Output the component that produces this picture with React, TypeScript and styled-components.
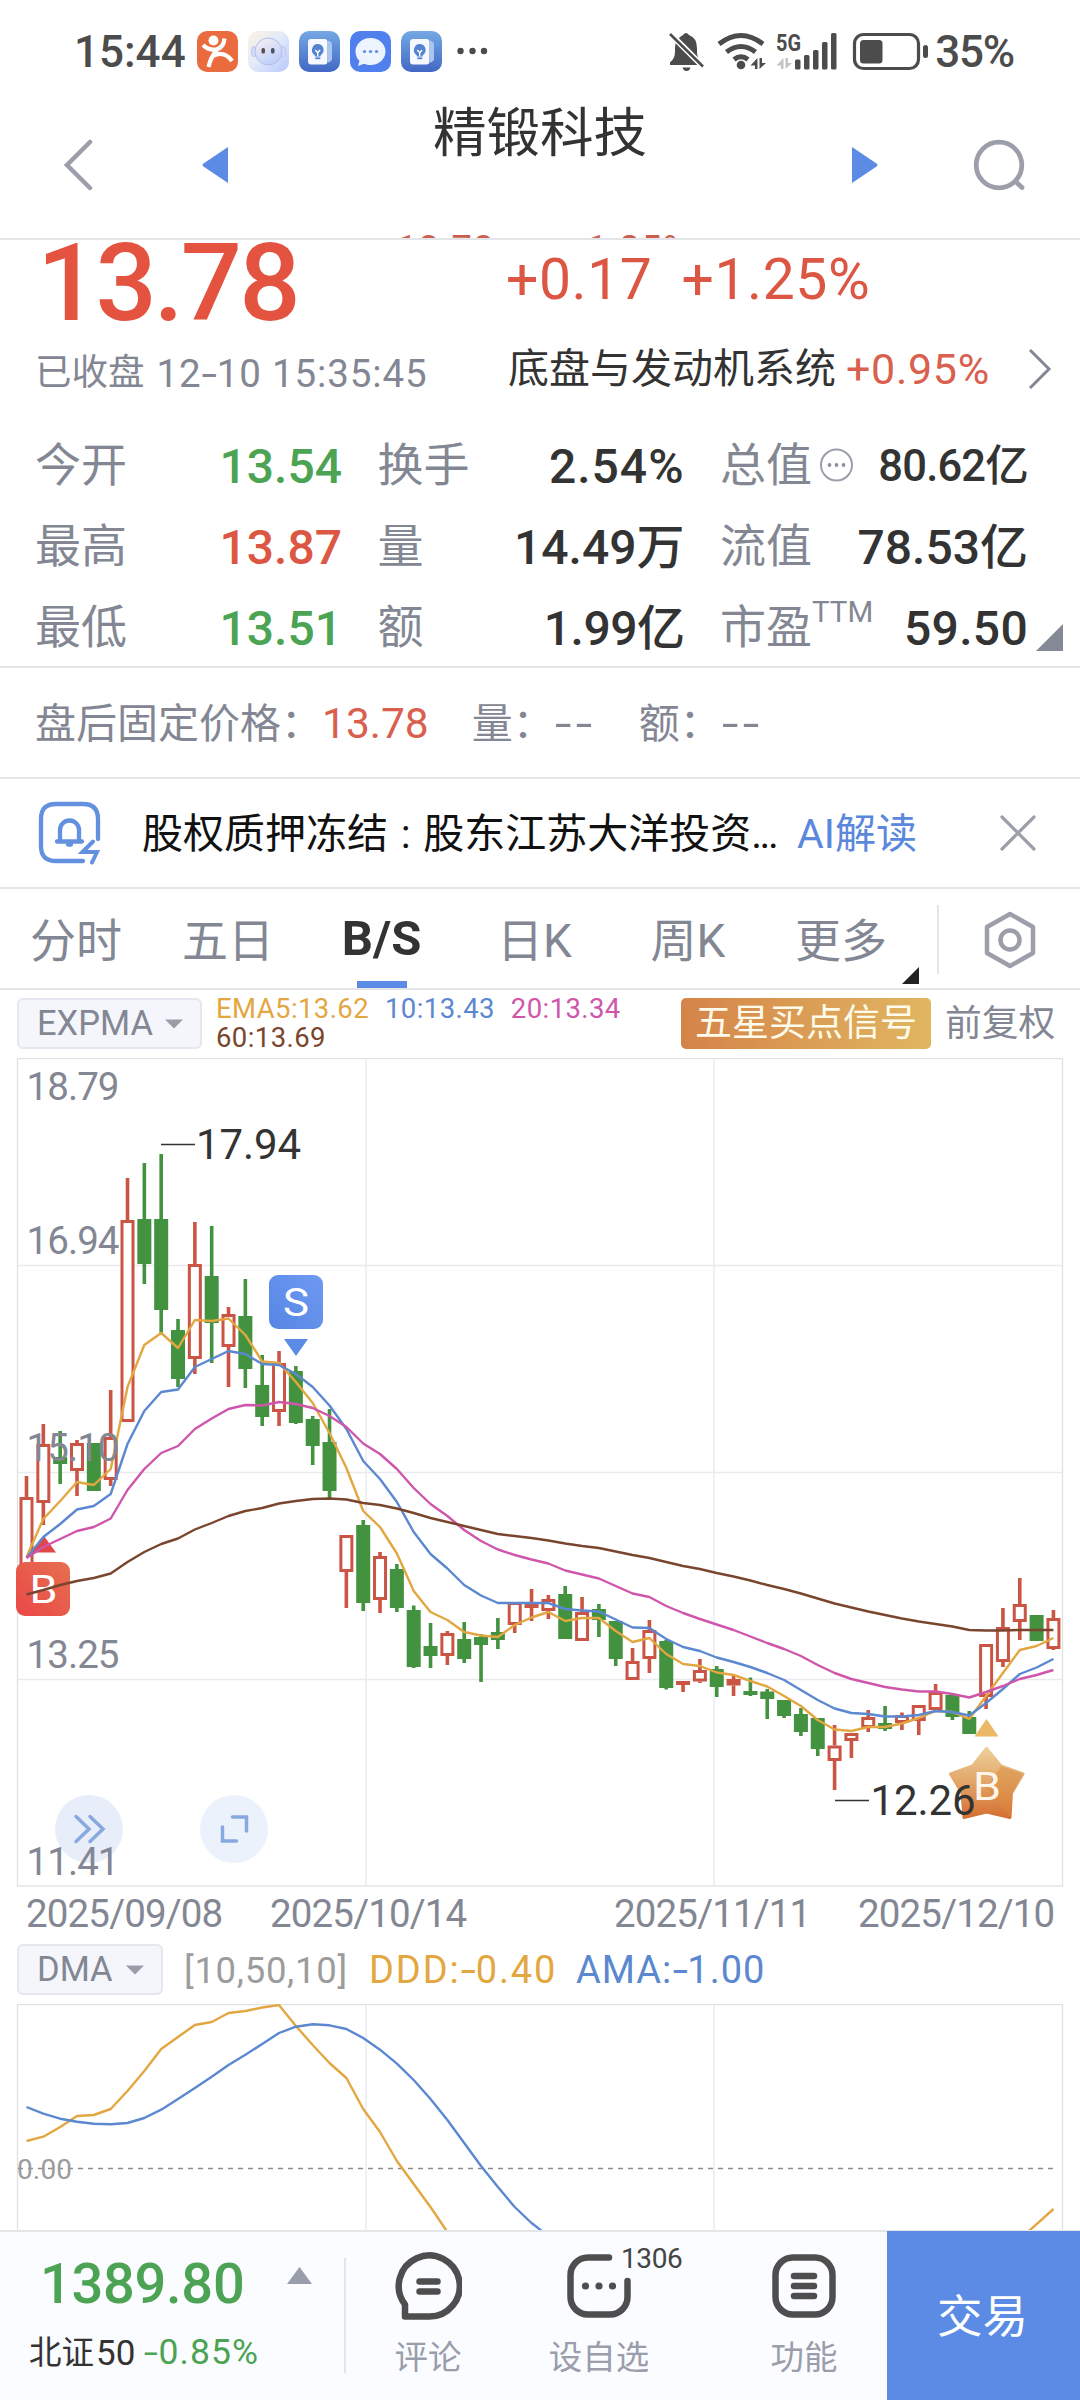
import React from 'react';
import styled, { createGlobalStyle } from 'styled-components';

const RED = '#e4533f';
const GREEN = '#4ba353';
const GRAY = '#838793';
const INK = '#333333';
const BLUE = '#5b8be5';
const LINE = '#e4e5e9';
const EMA = { y: '#e3a742', b: '#5b88d0', p: '#cf56ab', br: '#7a452d' };

const Global = createGlobalStyle`
  * { box-sizing: border-box; }
  body {
    margin: 0;
    background: #fff;
    font-family: Roboto, 'Noto Sans CJK SC', sans-serif;
    color: ${INK};
  }
  svg { display: block; flex: none; }
`;

const Screen = styled.div`
  width: 1080px;
  height: 2400px;
  overflow: hidden;
  display: flex;
  flex-direction: column;
  background: #fff;
`;

const Txt = styled.span<{ $s: number; $c?: string; $w?: number; $ls?: number; $ml?: number; $dy?: number }>`
  font-size: ${p => p.$s}px;
  color: ${p => p.$c || INK};
  font-weight: ${p => p.$w || 400};
  letter-spacing: ${p => p.$ls || 0}px;
  margin-left: ${p => p.$ml || 0}px;
  padding-top: ${p => Math.max(0, p.$dy || 0) * 2}px;
  padding-bottom: ${p => Math.max(0, -(p.$dy || 0)) * 2}px;
  line-height: 1;
  white-space: nowrap;
  flex: none;
`;

// hyphen widened to the length of a figure dash
const Dash = styled.span`
  display: inline-block;
  letter-spacing: 0;
  margin: 0 0.06em;
  transform: scaleX(1.45);
`;

// double hyphen shown while a value is not available
const Empty = styled.span`
  display: inline-block;
  width: 49px;
  font-size: 42.500px;
  line-height: 1;
  letter-spacing: 3px;
  margin-left: 1px;
  color: ${GRAY};
  transform: scaleX(1.4);
  transform-origin: 0 50%;
`;

/* ---------- status bar ---------- */
const StatusBar = styled.div`
  height: 100px;
  flex: none;
  display: flex;
  align-items: center;
  justify-content: space-between;
  padding: 3px 66px 0 74px;
`;
const Group = styled.div<{ $gap?: number }>`
  display: flex;
  align-items: center;
  gap: ${p => p.$gap || 0}px;
`;
const AppIcons = styled(Group)`
  margin-left: 11px;
`;

const NoteIcon = () => (
  <svg width="41" height="41" viewBox="0 0 41 41">
    <defs>
      <linearGradient id="note" x1="0" y1="0" x2="0" y2="1">
        <stop offset="0" stopColor="#75a8e4" />
        <stop offset="1" stopColor="#4168c4" />
      </linearGradient>
    </defs>
    <rect width="41" height="41" rx="10" fill="url(#note)" />
    <path d="M29 9.500q4 1 4 4v14q0 3-4 4z" fill="#a9c5f0" />
    <rect x="9" y="8" width="19.500" height="25.500" rx="3" fill="#f5f9ff" />
    <path d="M18.700 13a6 6 0 0 0-3.500 10.700q.8.800.8 1.800h5.500q0-1 .8-1.800A6 6 0 0 0 18.700 13z" fill="#5583d0" />
    <path d="M16.300 19l2.400 2.600 2.400-2.600M18.700 21.600v3.500" stroke="#fff" strokeWidth="1.400" fill="none" />
    <path d="M16.300 27.300h5" stroke="#5583d0" strokeWidth="1.800" />
  </svg>
);

const Status = () => (
  <StatusBar>
    <Group>
      <Txt $s={44} $w={500} $c="#4c4c4c">15:44</Txt>
      <AppIcons $gap={10}>
        <svg width="41" height="41" viewBox="0 0 41 41">
          <rect width="41" height="41" rx="10" fill="#ea6b3d" />
          <circle cx="16.500" cy="9.500" r="5" fill="#fff" />
          <path d="M6 14c4 4 9 5 13 4.500C24 17.500 27 13 27.500 7.500M11.500 36c1.500-7 4-12 8.500-17M16 25c7-4 14-2 19 5" fill="none" stroke="#fff" strokeWidth="4.200" />
        </svg>
        <svg width="41" height="41" viewBox="0 0 41 41">
          <defs>
            <linearGradient id="bot" x1="0" y1="0" x2="1" y2="1">
              <stop offset="0" stopColor="#fdf3e0" />
              <stop offset=".5" stopColor="#dfeafb" />
              <stop offset="1" stopColor="#b9c8fa" />
            </linearGradient>
            <linearGradient id="face" x1="0" y1="0" x2=".5" y2="1">
              <stop offset="0" stopColor="#f9f1f1" />
              <stop offset="1" stopColor="#bfd0fb" />
            </linearGradient>
          </defs>
          <rect width="41" height="41" rx="10" fill="url(#bot)" />
          <ellipse cx="6" cy="20.500" rx="2.500" ry="5" fill="#d3dbf9" stroke="#bcc3ee" />
          <ellipse cx="35" cy="20.500" rx="2.500" ry="5" fill="#d3dbf9" stroke="#bcc3ee" />
          <circle cx="20.500" cy="20.500" r="13.500" fill="url(#face)" stroke="#b5bdee" strokeWidth="1" />
          <rect x="13.500" y="17" width="3.500" height="5.500" rx="1.500" fill="#5f4a52" />
          <rect x="23" y="17" width="3.500" height="5.500" rx="1.500" fill="#4c5069" />
        </svg>
        <NoteIcon />
        <svg width="41" height="41" viewBox="0 0 41 41">
          <rect width="41" height="41" rx="10" fill="#4f80ee" />
          <path d="M20.500 7c8.500 0 15 6 15 13.500s-6.500 13.500-15 13.500c-2.500 0-4.500-.4-6.500-1.300L8 35l1.500-5C7 27.500 5.500 24 5.500 20.500 5.500 13 12 7 20.500 7z" fill="#edf4ff" />
          <g fill="#5b8be5">
            <circle cx="14.500" cy="20.500" r="1.600" />
            <circle cx="20.500" cy="20.500" r="1.600" />
            <circle cx="26.500" cy="20.500" r="1.600" />
          </g>
        </svg>
        <NoteIcon />
        <svg width="40" height="10" viewBox="0 0 40 10" fill="#4c4c4c">
          <circle cx="8.500" cy="4" r="3.200" />
          <circle cx="20.500" cy="4" r="3.200" />
          <circle cx="32" cy="4" r="3.200" />
        </svg>
      </AppIcons>
    </Group>
    <Group>
      <svg width="268" height="42" viewBox="0 0 268 42" fill="#4c4c4c">
        <path d="M3 34v-2.500q5-4 5-11v-3.500Q8 8 16 4q3-4 6 0 8 3 8 13v4q0 7 5 11V34z" />
        <path d="M15.500 36.500h8q-1 3.500-4 3.500t-4-3.500z" />
        <path d="M2 1.500l34 34" stroke="#fff" strokeWidth="6" />
        <path d="M3 3l33 32.500" stroke="#4c4c4c" strokeWidth="2.600" />
        <g fill="none" stroke="#4c4c4c" strokeWidth="5">
          <path d="M52 13q22-17 44 0" />
          <path d="M59.500 21q14.500-11 29 0" />
          <path d="M67 28.500q7-5.500 14 0" />
        </g>
        <circle cx="74" cy="34" r="4.300" />
        <path d="M90.500 27v11h-2.500v-3.500h-4.500zM92.500 27v11l6.500-6h-4v-5z" />
        <text x="109" y="19.500" fontSize="24" fontWeight="700" textLength="25" lengthAdjust="spacingAndGlyphs">5G</text>
        <path d="M116.500 27v11h-2.500v-3.500h-4.500zM118.500 27v11l6.500-6h-4v-5z" fill="#c4c4c4" />
        <rect x="128" y="28.500" width="5.500" height="10" rx="1.500" />
        <rect x="137" y="24" width="5.500" height="14.500" rx="1.500" />
        <rect x="146" y="19" width="5.500" height="19.500" rx="1.500" />
        <rect x="155" y="11" width="5.500" height="27.500" rx="1.500" />
        <rect x="164" y="2" width="5.500" height="36.500" rx="1.500" />
        <rect x="187.500" y="3.500" width="64" height="34" rx="9" fill="none" stroke="#4c4c4c" strokeWidth="3.200" />
        <rect x="193" y="9" width="22.500" height="23.500" rx="3.500" />
        <rect x="256" y="14" width="5" height="13" rx="2.500" />
      </svg>
      <Txt $s={44} $w={500} $c="#4c4c4c" $ls={-1.2}>35%</Txt>
    </Group>
  </StatusBar>
);

/* ---------- nav ---------- */
const Nav = styled.header`
  height: 140px;
  flex: none;
  display: grid;
  grid-template-columns: 380px 320px 380px;
  overflow: hidden;
  border-bottom: 2px solid ${LINE};
`;
const NavSide = styled.div<{ $right?: boolean }>`
  height: 130px;
  display: flex;
  align-items: center;
  justify-content: space-between;
  padding: ${p => (p.$right ? '0 55px 0 152px' : '0 152px 0 63px')};
`;
const TitleBox = styled.div`
  display: flex;
  flex-direction: column;
  align-items: center;
`;
const Title = styled.h1`
  margin: 2px 0 0;
  font-size: 53.500px;
  line-height: 64px;
  font-weight: 400;
  color: ${INK};
`;
const SubTitle = styled.div`
  display: flex;
  gap: 70px;
  margin-top: 63px;
  padding-left: 8px;
  font-size: 36px;
  letter-spacing: 1.5px;
  line-height: 40px;
  color: #c9604f;
  white-space: nowrap;
`;

/* ---------- quote ---------- */
const Quote = styled.section`
  height: 428px;
  flex: none;
  position: relative;
  border-bottom: 2px solid ${LINE};
`;
const PriceRow = styled.div`
  height: 92px;
  display: grid;
  grid-template-columns: 469px 1fr;
  padding-left: 37px;
`;
const Price = styled.div`
  font-size: 108px;
  line-height: 86px;
  font-weight: 500;
  letter-spacing: -3px;
  color: ${RED};
`;
const Change = styled.div`
  display: flex;
  gap: 29px;
  font-size: 57px;
  line-height: 79px;
  letter-spacing: 0.6px;
  color: #dc5743;
`;
const InfoRow = styled.div`
  height: 78px;
  display: grid;
  grid-template-columns: 473px 485px 1fr;
  padding: 0 27px 0 35px;
  align-items: center;
  justify-items: start;
  & > svg { justify-self: end; margin-bottom: 4px; }
`;
const Stats = styled.div`
  display: grid;
  grid-template-columns: 307px 307px 308px;
  column-gap: 35.5px;
  grid-auto-rows: 81px;
  padding: 14px 0 0 35px;
`;
const Stat = styled.div`
  display: flex;
  align-items: center;
  justify-content: space-between;
`;
const Label = styled.span`
  display: flex;
  align-items: center;
  font-size: 46px;
  line-height: 60px;
  color: ${GRAY};
  white-space: nowrap;
`;
const Sup = styled.sup`
  align-self: flex-start;
  font-size: 29.500px;
  line-height: 30px;
`;
const Value = styled.span<{ $c?: string; $s?: number; $ls?: number }>`
  font-size: ${p => p.$s || 48}px;
  line-height: 60px;
  padding-top: 5px;
  font-weight: 500;
  letter-spacing: ${p => p.$ls ?? 0}px;
  color: ${p => p.$c || INK};
  white-space: nowrap;
`;
const Corner = styled.svg`
  position: absolute;
  right: 17px;
  bottom: 15px;
`;

const MoreDots = () => (
  <svg width="42" height="34" viewBox="0 0 42 34">
    <circle cx="24.500" cy="17" r="15.500" fill="none" stroke="#9b9faa" strokeWidth="2" />
    <g fill="#8d919c">
      <circle cx="17.500" cy="17" r="1.900" />
      <circle cx="24.500" cy="17" r="1.900" />
      <circle cx="31.500" cy="17" r="1.900" />
    </g>
  </svg>
);

const QuotePanel = () => (
  <Quote>
    <PriceRow>
      <Price>13.78</Price>
      <Change><span>+0.17</span><span>+1.25%</span></Change>
    </PriceRow>
    <InfoRow>
      <Group>
        <Txt $s={36.5} $c={GRAY} $dy={2}>已收盘</Txt>
        <Txt $s={38.5} $c={GRAY} $ml={12} $dy={3} $ls={0.85}>12<Dash>-</Dash>10 15:35:45</Txt>
      </Group>
      <Group>
        <Txt $s={41} $dy={-2}>底盘与发动机系统</Txt>
        <Txt $s={43} $c="#d9604e" $ml={10} $ls={0.7} $dy={-2}>+0.95%</Txt>
      </Group>
      <svg width="26" height="42" viewBox="0 0 26 42" fill="none" stroke={GRAY} strokeWidth="3">
        <path d="M3 2l19 19L3 40" />
      </svg>
    </InfoRow>
    <Stats>
      <Stat><Label>今开</Label><Value $c={GREEN}>13.54</Value></Stat>
      <Stat><Label>换手</Label><Value $ls={1}>2.54%</Value></Stat>
      <Stat><Label>总值<MoreDots /></Label><Value $s={43.5} $ls={-0.8}>80.62亿</Value></Stat>
      <Stat><Label>最高</Label><Value $c="#dc5743">13.87</Value></Stat>
      <Stat><Label>量</Label><Value>14.49万</Value></Stat>
      <Stat><Label>流值</Label><Value>78.53亿</Value></Stat>
      <Stat><Label>最低</Label><Value $c={GREEN}>13.51</Value></Stat>
      <Stat><Label>额</Label><Value $ls={-0.5}>1.99亿</Value></Stat>
      <Stat><Label>市盈<Sup>TTM</Sup></Label><Value $ls={0.3}>59.50</Value></Stat>
    </Stats>
    <Corner width="27" height="27" viewBox="0 0 27 27"><path d="M27 0v27H0z" fill="#858995" /></Corner>
  </Quote>
);

/* ---------- after hours / notice ---------- */
const AfterHours = styled.section`
  height: 111px;
  flex: none;
  display: flex;
  align-items: center;
  padding: 4px 0 0 35px;
  border-bottom: 2px solid ${LINE};
`;
const Notice = styled.section`
  height: 110px;
  flex: none;
  display: flex;
  align-items: center;
  padding: 0 44px 0 38px;
  border-bottom: 2px solid ${LINE};
`;
const NoticeText = styled.div`
  width: 640px;
  margin-left: 38px;
  padding-top: 2px;
  font-size: 41px;
  line-height: 54px;
  word-spacing: 2.500px;
  color: #111;
  white-space: nowrap;
`;
const Dots = styled.span`
  letter-spacing: -2.500px;
`;
const NoticeLink = styled.a`
  margin: 0 auto 0 15px;
  padding-top: 2px;
  font-size: 41px;
  line-height: 54px;
  color: #5a88dc;
`;

/* ---------- tabs ---------- */
const Tabs = styled.nav`
  height: 101px;
  flex: none;
  display: grid;
  grid-template-columns: 152px 152px 155px 153px 154px 171px 1fr;
  border-bottom: 2px solid ${LINE};
`;
const Tab = styled.div<{ $on?: boolean; $pr?: number }>`
  position: relative;
  display: flex;
  align-items: center;
  justify-content: center;
  padding: 0 ${p => p.$pr || 0}px ${p => (p.$on ? 1 : 3)}px 0;
  font-size: ${p => (p.$on ? 49 : 46)}px;
  font-weight: ${p => (p.$on ? 700 : 400)};
  color: ${p => (p.$on ? INK : GRAY)};
  &::after {
    content: '';
    display: ${p => (p.$on ? 'block' : 'none')};
    position: absolute;
    left: 53px;
    bottom: 0;
    width: 50px;
    height: 7px;
    background: ${BLUE};
  }
`;
const TabCorner = styled.svg`
  position: absolute;
  right: 18px;
  bottom: 4px;
`;
const Settings = styled.div`
  height: 69px;
  margin-top: 16px;
  border-left: 2px solid ${LINE};
  display: flex;
  align-items: center;
  padding-left: 45px;
`;

/* ---------- indicator headers ---------- */
const Indicators = styled.div`
  height: 68px;
  flex: none;
  display: flex;
  align-items: flex-start;
  padding: 8px 17px 0;
`;
const Picker = styled.button<{ $w: number }>`
  width: ${p => p.$w}px;
  height: 51px;
  flex: none;
  padding: 0 17px 0 18px;
  display: flex;
  align-items: center;
  justify-content: space-between;
  border: 2px solid #e5e6ef;
  border-radius: 6px;
  background: #f5f6fb;
  color: ${GRAY};
  font: 400 34.500px/1 Roboto, sans-serif;
`;
const Emas = styled.div`
  width: 479px;
  flex: none;
  padding: 0 20px 0 14px;
  display: flex;
  flex-wrap: wrap;
  column-gap: 16px;
  align-content: flex-start;
  font-size: 27.500px;
  letter-spacing: 0.4px;
  line-height: 29px;
  margin-top: -4px;
`;
const Ema = styled.span<{ $c: string }>`
  color: ${p => p.$c};
`;
const Signal = styled.div`
  width: 250px;
  height: 51px;
  flex: none;
  display: flex;
  align-items: center;
  justify-content: center;
  border-radius: 5px;
  background: linear-gradient(90deg, #d58449, #e0b661);
  color: #fffbea;
  font-size: 37px;
  line-height: 51px;
`;
const Adjust = styled.div`
  margin-left: 14px;
  font-size: 36.800px;
  line-height: 51px;
  color: ${GRAY};
  white-space: nowrap;
`;
const Caret = () => (
  <svg width="18" height="10" viewBox="0 0 18 10"><path d="M0 .5h18L9 9.500z" fill="#9a9da8" /></svg>
);

/* ---------- main chart ---------- */
type Candle = [number, number, number, number, number];
// up flag, high, body top, body bottom, low
const CANDLES: Candle[] = [
  [1, 1476, 1497, 1567, 1567], [1, 1424, 1444, 1503, 1525], [0, 1431, 1457, 1464, 1484], [1, 1440, 1443, 1471, 1496],
  [0, 1443, 1443, 1491, 1491], [1, 1390, 1437, 1480, 1486], [1, 1178, 1220, 1422, 1422], [0, 1163, 1219, 1264, 1284],
  [0, 1154, 1219, 1310, 1335], [0, 1319, 1330, 1379, 1387], [1, 1222, 1264, 1359, 1374], [0, 1226, 1276, 1323, 1363],
  [1, 1307, 1314, 1347, 1387], [0, 1279, 1316, 1369, 1388], [0, 1355, 1385, 1417, 1426], [1, 1351, 1363, 1412, 1426],
  [0, 1366, 1371, 1423, 1424], [0, 1416, 1419, 1446, 1465], [0, 1409, 1442, 1491, 1498], [1, 1535, 1535, 1572, 1608],
  [0, 1520, 1525, 1603, 1611], [1, 1552, 1556, 1600, 1613], [0, 1564, 1569, 1608, 1612], [0, 1605.5, 1610, 1667, 1668],
  [0, 1623, 1646, 1656, 1668], [1, 1631, 1633, 1656, 1665], [0, 1622, 1639, 1659, 1663], [0, 1634, 1637, 1645, 1682],
  [0, 1618, 1632, 1640, 1649], [1, 1602, 1602, 1625, 1633], [1, 1589, 1602, 1608, 1621], [1, 1595, 1599, 1611, 1619],
  [0, 1586, 1594, 1639, 1639], [1, 1597, 1612, 1641, 1641], [0, 1604, 1609, 1620, 1637], [0, 1621, 1621, 1659, 1666],
  [1, 1648, 1661, 1680, 1680], [1, 1620, 1630, 1659, 1673], [0, 1640, 1641, 1688, 1689.5], [1, 1681, 1681, 1685, 1692],
  [1, 1659, 1670, 1681.5, 1683], [0, 1666, 1669, 1687, 1697], [1, 1675, 1679, 1685.5, 1696], [0, 1677.5, 1691, 1695, 1696],
  [0, 1689, 1691.5, 1699, 1719], [0, 1700, 1700, 1716, 1718], [0, 1708, 1714, 1732, 1736], [0, 1718, 1718, 1749, 1756],
  [1, 1725, 1745.5, 1761, 1790], [1, 1733, 1733, 1741, 1758], [1, 1710, 1717, 1728, 1732], [0, 1706, 1723, 1729, 1731],
  [1, 1712.5, 1715, 1723, 1730], [1, 1705, 1705, 1721, 1735], [1, 1684, 1692, 1710, 1710], [0, 1695, 1695, 1717, 1720],
  [0, 1711, 1717, 1734, 1734], [1, 1644, 1644, 1697, 1709], [1, 1608, 1627, 1662, 1667], [1, 1578, 1604, 1622, 1640],
  [0, 1615, 1615, 1641, 1641], [1, 1610, 1618, 1649, 1650],
];
const EMA5 = [1557, 1519, 1501, 1482, 1485, 1469, 1387, 1345, 1333, 1348, 1320, 1321, 1318.5, 1335, 1361.5, 1363, 1382, 1403, 1433, 1468, 1511, 1527, 1553.5, 1591, 1612, 1620, 1632, 1635.5, 1637, 1625, 1617.5, 1612, 1621, 1618, 1618, 1631, 1642, 1638, 1654, 1664, 1666, 1672.5, 1675, 1681, 1686.5, 1696, 1706, 1720, 1729.5, 1731, 1727, 1727, 1723.5, 1718, 1711, 1712, 1719, 1696, 1673, 1650, 1646, 1638];
const EMA10 = [1558, 1537, 1524, 1509.5, 1506, 1494, 1444, 1411, 1392, 1389.5, 1367, 1359, 1351, 1354, 1364, 1365, 1374, 1387, 1405.5, 1429, 1461, 1479, 1502, 1532, 1554, 1568.5, 1585, 1595.5, 1603, 1603, 1603, 1603, 1609, 1610.5, 1611.5, 1619.5, 1627.5, 1628, 1639, 1647, 1651, 1657.5, 1662, 1667, 1673, 1680, 1690, 1700, 1708.5, 1713, 1714, 1716.5, 1716.5, 1715, 1711, 1712, 1715.5, 1703, 1689, 1674, 1667.5, 1659];
const EMA20 = [1558, 1547, 1539, 1531, 1527, 1518.5, 1490, 1469, 1453, 1446, 1429, 1418.5, 1409, 1405, 1405.5, 1402, 1404, 1408, 1416, 1427, 1443.5, 1454, 1469, 1488, 1504, 1516, 1530, 1541, 1549.5, 1555, 1559.5, 1563.5, 1570.5, 1574.5, 1578.5, 1586, 1593.5, 1597, 1606, 1613, 1619, 1624.5, 1630, 1636.5, 1643, 1649, 1656, 1665, 1673, 1679, 1683, 1687, 1689.5, 1691.5, 1691.5, 1694, 1697.5, 1692, 1686, 1679, 1675, 1670];
const EMA60 = [1594.5, 1590, 1585, 1581, 1578, 1573.5, 1562, 1552, 1544, 1538.5, 1529.5, 1523, 1516, 1511, 1508, 1503.5, 1501, 1499, 1498.5, 1499.5, 1503, 1505, 1508.5, 1513, 1518, 1522, 1526, 1530, 1534, 1536, 1538, 1540.5, 1543.5, 1546, 1548, 1551.5, 1555, 1558, 1562, 1566, 1569, 1573, 1576.5, 1580.5, 1585, 1589, 1593.5, 1598.5, 1603.5, 1607.5, 1611.5, 1615, 1618.5, 1621.5, 1624, 1626.5, 1630, 1630.5, 1630.5, 1630, 1630, 1630];
const DDD = [2141, 2136.7, 2127, 2116, 2115, 2109, 2091, 2071, 2049, 2037, 2025, 2022, 2013, 2011, 2007.5, 2005, 2026, 2045, 2063, 2078, 2109, 2132, 2161, 2184, 2207, 2232];
const AMA = [2107, 2113.7, 2118.7, 2121.7, 2123.7, 2124.3, 2123, 2118, 2109.7, 2099, 2088, 2076.7, 2065, 2054.7, 2044, 2033, 2026.7, 2024.3, 2025.3, 2029, 2038, 2049.7, 2063.7, 2080, 2099, 2120, 2143, 2166, 2187, 2207, 2223, 2236];

const xAt = (i: number) => 26.5 + i * 16.835;
const pts = (a: number[]) => a.map((y, i) => `${xAt(i).toFixed(1)},${y}`).join(' ');

const ChartText = styled.text`
  font-family: Roboto, sans-serif;
`;
const Line = styled.polyline`
  fill: none;
  stroke-width: 2.4;
  stroke-linejoin: round;
`;

const CandleShape = ({ c, i }: { c: Candle; i: number }) => {
  const [up, hi, top, bot, lo] = c;
  const x = xAt(i);
  if (!up) {
    return (
      <g fill="#43923f">
        <rect x={x - 1.8} y={hi} width="3.6" height={lo - hi} />
        <rect x={x - 7} y={top} width="14" height={bot - top} />
      </g>
    );
  }
  return (
    <g fill="#cb5544">
      <rect x={x - 1.8} y={hi} width="3.6" height={top - hi} />
      <rect x={x - 1.8} y={bot} width="3.6" height={lo - bot} />
      {bot - top <= 6.5
        ? <rect x={x - 7} y={top} width="14" height={bot - top} />
        : <rect x={x - 5.5} y={top + 1.5} width="11" height={bot - top - 3} fill="#fff" stroke="#cb5544" strokeWidth="3" />}
    </g>
  );
};

const PRICES: [string, number][] = [['18.79', 1100], ['16.94', 1254], ['15.10', 1461], ['13.25', 1668], ['11.41', 1875]];

const MainChart = () => (
  <svg width="1080" height="829" viewBox="0 1058 1080 829">
    <defs>
      <linearGradient id="sellBg" x1="0" y1="1" x2="1" y2="0">
        <stop offset="0" stopColor="#5685e4" /><stop offset="1" stopColor="#6f9af2" />
      </linearGradient>
      <linearGradient id="buyBg" x1="0" y1="1" x2="1" y2="0">
        <stop offset="0" stopColor="#ea4747" /><stop offset="1" stopColor="#e6704f" />
      </linearGradient>
      <linearGradient id="star" x1="0" y1="0" x2="0" y2="1">
        <stop offset="0" stopColor="#eccf98" /><stop offset=".5" stopColor="#e2a467" /><stop offset="1" stopColor="#d66f33" />
      </linearGradient>
    </defs>
    <g stroke="#eff0f3" strokeWidth="2">
      <path d="M366 1059V1886M714 1059V1886" />
      <path d="M18 1265.500H1062M18 1472.500H1062M18 1679.500H1062" stroke="#e9eaed" strokeWidth="1.500" />
    </g>
    <rect x="17.500" y="1058.500" width="1045" height="827.500" fill="none" stroke="#e0e1e5" strokeWidth="1.300" />
    {CANDLES.map((c, i) => <CandleShape key={i} c={c} i={i} />)}
    <path d="M44 1536l12 16.500H32z" fill="#e04848" />
    <rect x="16" y="1562" width="54" height="54" rx="9" fill="url(#buyBg)" />
    <ChartText x="43.500" y="1602.500" fontSize="38" fill="#fff" textAnchor="middle" textLength="28" lengthAdjust="spacingAndGlyphs">B</ChartText>
    <rect x="269" y="1275" width="54" height="54" rx="9" fill="url(#sellBg)" />
    <ChartText x="296" y="1315.500" fontSize="38" fill="#fff" textAnchor="middle" textLength="26" lengthAdjust="spacingAndGlyphs">S</ChartText>
    <path d="M284 1339h24l-12 17z" fill={BLUE} />
    <path d="M986.500 1719l12 17.500h-24z" fill="#ebb866" />
    <path d="M986.500 1748.500l14.500 17.500 22 8-11.500 19-1.500 24.500-23.500-5.500-22.500 5.500-2-24.500-11.500-19 22-8z" fill="url(#star)" stroke="url(#star)" strokeWidth="3" strokeLinejoin="round" />
    <path d="M1001 1766l22 8-11.500 19-1.500 24.500-23.500-30z" fill="#d98a3c" opacity=".45" />
    <ChartText x="987" y="1799.500" fontSize="38" fill="#fff6ea" textAnchor="middle" textLength="28" lengthAdjust="spacingAndGlyphs">B</ChartText>
    <circle cx="89" cy="1829" r="34" fill="#e7eef9" />
    <circle cx="234" cy="1829" r="34" fill="#ecf2fb" />
    <g fill="none" stroke="#88a9e0" strokeWidth="3.500" strokeLinecap="round">
      <path d="M76 1816.500l13 12.500-13 12.500M90 1816.500l13 12.500-13 12.500" />
      <path d="M232.500 1817h14v14M222.500 1827v14h14" />
    </g>
    <Line points={pts(EMA5)} stroke={EMA.y} />
    <Line points={pts(EMA10)} stroke={EMA.b} />
    <Line points={pts(EMA20)} stroke={EMA.p} />
    <Line points={pts(EMA60)} stroke={EMA.br} />
    {PRICES.map(([t, y]) => (
      <ChartText key={t} x="26.500" y={y} fontSize="38.500" fill={GRAY} textLength="93">{t}</ChartText>
    ))}
    <path d="M161 1144.500h34M835 1800.500h34" stroke="#333" strokeWidth="1.300" />
    <ChartText x="196" y="1159" fontSize="42" fill={INK} textLength="105">17.94</ChartText>
    <ChartText x="870.500" y="1815" fontSize="42" fill={INK} textLength="105">12.26</ChartText>
  </svg>
);

const Dates = styled.div`
  height: 57px;
  flex: none;
  display: grid;
  grid-template-columns: 244px 344px 244px 1fr;
  padding: 0 0 0 26px;
  font-size: 38.500px;
  line-height: 54px;
  letter-spacing: -0.85px;
  color: ${GRAY};
`;
const DmaHead = styled.div`
  height: 60px;
  flex: none;
  display: flex;
  align-items: flex-start;
  padding-left: 17px;
`;
const DmaValue = styled.span<{ $c: string; $s: number; $ls: number; $w: number }>`
  width: ${p => p.$w}px;
  font-size: ${p => p.$s}px;
  letter-spacing: ${p => p.$ls}px;
  line-height: 53px;
  white-space: nowrap;
  color: ${p => p.$c};
`;
const DmaValues = styled.div`
  display: flex;
  padding-left: 21px;
`;

const DmaChart = () => (
  <svg width="1080" height="226" viewBox="0 2004 1080 226">
    <path d="M366 2005V2230M714 2005V2230" stroke="#eff0f3" strokeWidth="2" />
    <path d="M17.500 2230V2004.700H1062.500V2230" fill="none" stroke="#e0e1e5" strokeWidth="1.300" />
    <path d="M18 2168.500H1057" stroke="#8b8b8b" strokeWidth="1.300" strokeDasharray="5 5" />
    <Line points={pts(DDD)} stroke={EMA.y} />
    <path d="M1029 2231L1053.500 2209" stroke={EMA.y} strokeWidth="2.400" />
    <Line points={pts(AMA)} stroke={EMA.b} />
    <ChartText x="17" y="2178.500" fontSize="28" fill="#9c9c9c" textLength="55">0.00</ChartText>
  </svg>
);

/* ---------- bottom bar ---------- */
const Bottom = styled.footer`
  height: 170px;
  flex: none;
  display: flex;
  border-top: 2px solid ${LINE};
  background: #fbfcff;
`;
const IndexBox = styled.div`
  width: 346px;
  height: 115px;
  flex: none;
  margin-top: 26px;
  border-right: 2px solid #e4e5ec;
  padding: 0 32px 0 29px;
`;
const IndexTop = styled.div`
  height: 64px;
  margin-top: -7px;
  display: flex;
  justify-content: space-between;
  padding-left: 11px;
  font-size: 56px;
  line-height: 66px;
  font-weight: 500;
  letter-spacing: -0.3px;
  color: ${GREEN};
  svg { margin-top: 16px; }
`;
const IndexSub = styled.div`
  height: 70px;
  display: flex;
  align-items: center;
  padding-top: 6px;
`;
const Action = styled.div<{ $w: number; $pl?: number }>`
  position: relative;
  width: ${p => p.$w}px;
  flex: none;
  padding: 20px 0 0 ${p => p.$pl || 0}px;
  display: flex;
  flex-direction: column;
  align-items: center;
  gap: 12px;
  font-size: 33.500px;
  line-height: 52px;
  color: #9a9dab;
`;
const Count = styled.span`
  position: absolute;
  left: 111px;
  top: 10px;
  font-size: 28px;
  line-height: 34px;
  letter-spacing: -0.4px;
  color: #444;
`;
const Trade = styled.button`
  width: 193px;
  height: 169px;
  flex: none;
  margin: -1px 0 0;
  border: 0;
  padding: 0 2px 3px 0;
  background: ${BLUE};
  color: #fff;
  font: 400 45.500px/1 'Noto Sans CJK SC', sans-serif;
`;

const BottomBar = () => (
  <Bottom>
    <IndexBox>
      <IndexTop>
        1389.80
        <svg width="25" height="17" viewBox="0 0 25 17"><path d="M12.500 0L25 17H0z" fill="#9a9dab" /></svg>
      </IndexTop>
      <IndexSub>
        <Txt $s={32.5} $w={400}>北证</Txt>
        <Txt $s={35} $ml={2}>50</Txt>
        <Txt $s={35.5} $c={GREEN} $ml={9} $ls={1.1}><Dash>-</Dash>0.85%</Txt>
      </IndexSub>
    </IndexBox>
    <Action $w={164}>
      <svg width="68" height="68" viewBox="0 0 68 68" fill="none" stroke="#4e4e4e" strokeWidth="6.500">
        <path d="M34.500 64.500H11V52.500A30.500 30.500 0 1 1 34.500 64.500z" strokeLinejoin="round" />
        <path d="M25.500 29.500h18M25.500 39.500h18" strokeLinecap="round" />
      </svg>
      评论
    </Action>
    <Action $w={178}>
      <svg width="68" height="68" viewBox="0 0 68 68" fill="none" stroke="#4e4e4e" strokeWidth="6.500" strokeLinecap="round">
        <path d="M44 5.500H23A17.500 17.500 0 0 0 5.500 23v22A17.500 17.500 0 0 0 23 62.500h22A17.500 17.500 0 0 0 62.500 45V29" />
        <g fill="#4e4e4e" stroke="none">
          <circle cx="20.500" cy="34" r="3.600" /><circle cx="34" cy="34" r="3.600" /><circle cx="47.500" cy="34" r="3.600" />
        </g>
      </svg>
      设自选
      <Count>1306</Count>
    </Action>
    <Action $w={199} $pl={33}>
      <svg width="68" height="68" viewBox="0 0 68 68" fill="none" stroke="#4e4e4e" strokeWidth="6.500" strokeLinecap="round">
        <rect x="5.500" y="5.500" width="57" height="57" rx="17.500" />
        <path d="M24 24h20M24 34h20M24 44h20" />
      </svg>
      功能
    </Action>
    <Trade>交易</Trade>
  </Bottom>
);

export default function App() {
  return (
    <Screen>
      <Global />
      <Status />
      <Nav>
        <NavSide>
          <svg width="30" height="52" viewBox="0 0 30 52" fill="none" stroke="#9c9faa" strokeWidth="4.500" strokeLinecap="round">
            <path d="M27 3L4 26l23 23" />
          </svg>
          <svg width="26" height="36" viewBox="0 0 26 36"><path d="M26 0v36L1.500 19.500q-2-1.500 0-3z" fill={BLUE} /></svg>
        </NavSide>
        <TitleBox>
          <Title>精锻科技</Title>
          <SubTitle><span>13.78</span><span>+1.25%</span></SubTitle>
        </TitleBox>
        <NavSide $right>
          <svg width="26" height="36" viewBox="0 0 26 36"><path d="M0 0v36l24.500-16.500q2-1.500 0-3z" fill={BLUE} /></svg>
          <svg width="52" height="52" viewBox="0 0 52 52" fill="none" stroke="#9c9faa" strokeWidth="4.800" strokeLinecap="round">
            <circle cx="26" cy="26" r="22.800" />
            <path d="M42.500 42.500l6.500 6" />
          </svg>
        </NavSide>
      </Nav>
      <QuotePanel />
      <AfterHours>
        <Txt $s={41} $c={GRAY}>盘后固定价格：</Txt>
        <Txt $s={42.5} $c="#d9604e">13.78</Txt>
        <Txt $s={41} $c={GRAY} $ml={43}>量：</Txt>
        <Empty>--</Empty>
        <Txt $s={41} $c={GRAY} $ml={35}>额：</Txt>
        <Empty>--</Empty>
      </AfterHours>
      <Notice>
        <svg width="66" height="64" viewBox="0 0 66 64" fill="none" stroke="#6490e0" strokeWidth="4.300" strokeLinecap="round">
          <path d="M45 60H18Q3 60 3 45V18Q3 3 18 3h27q15 0 15 15v20" />
          <path d="M19 40.500h25M22 40V29a9.500 9.500 0 0 1 19 0v11M30 43.500h3" />
          <path d="M55 40.500L44.500 51h14.500L54 61.500" strokeWidth="4" />
        </svg>
        <NoticeText>股权质押冻结 : 股东江苏大洋投资<Dots>...</Dots></NoticeText>
        <NoticeLink>AI解读</NoticeLink>
        <svg width="36" height="36" viewBox="0 0 36 36" stroke="#9c9faa" strokeWidth="3.200" strokeLinecap="round">
          <path d="M2 2l32 32M34 2L2 34" />
        </svg>
      </Notice>
      <Tabs>
        <Tab>分时</Tab>
        <Tab>五日</Tab>
        <Tab $on>B/S</Tab>
        <Tab $pr={2}>日K</Tab>
        <Tab $pr={2}>周K</Tab>
        <Tab $pr={21}>
          更多
          <TabCorner width="17" height="17" viewBox="0 0 17 17"><path d="M17 0v17H0z" fill="#222" /></TabCorner>
        </Tab>
        <Settings>
          <svg width="52" height="58" viewBox="0 0 52 58" fill="none" stroke="#9c9faa" strokeWidth="4.500" strokeLinejoin="round">
            <path d="M26 3l23 13v26L26 55 3 42V16z" />
            <circle cx="26" cy="29" r="9.500" />
          </svg>
        </Settings>
      </Tabs>
      <Indicators>
        <Picker $w={185}>EXPMA<Caret /></Picker>
        <Emas>
          <Ema $c={EMA.y}>EMA5:13.62</Ema>
          <Ema $c={EMA.b}>10:13.43</Ema>
          <Ema $c={EMA.p}>20:13.34</Ema>
          <Ema $c={EMA.br}>60:13.69</Ema>
        </Emas>
        <Signal>五星买点信号</Signal>
        <Adjust>前复权</Adjust>
      </Indicators>
      <MainChart />
      <Dates>
        <span>2025/09/08</span>
        <span>2025/10/14</span>
        <span>2025/11/11</span>
        <span>2025/12/10</span>
      </Dates>
      <DmaHead>
        <Picker $w={146}>DMA<Caret /></Picker>
        <DmaValues>
          <DmaValue $c="#9c9c9c" $s={36.5} $ls={0.7} $w={185}>[10,50,10]</DmaValue>
          <DmaValue $c={EMA.y} $s={38} $ls={1.9} $w={207}>DDD:<Dash>-</Dash>0.40</DmaValue>
          <DmaValue $c={EMA.b} $s={38} $ls={1} $w={208}>AMA:<Dash>-</Dash>1.00</DmaValue>
        </DmaValues>
      </DmaHead>
      <DmaChart />
      <BottomBar />
    </Screen>
  );
}
